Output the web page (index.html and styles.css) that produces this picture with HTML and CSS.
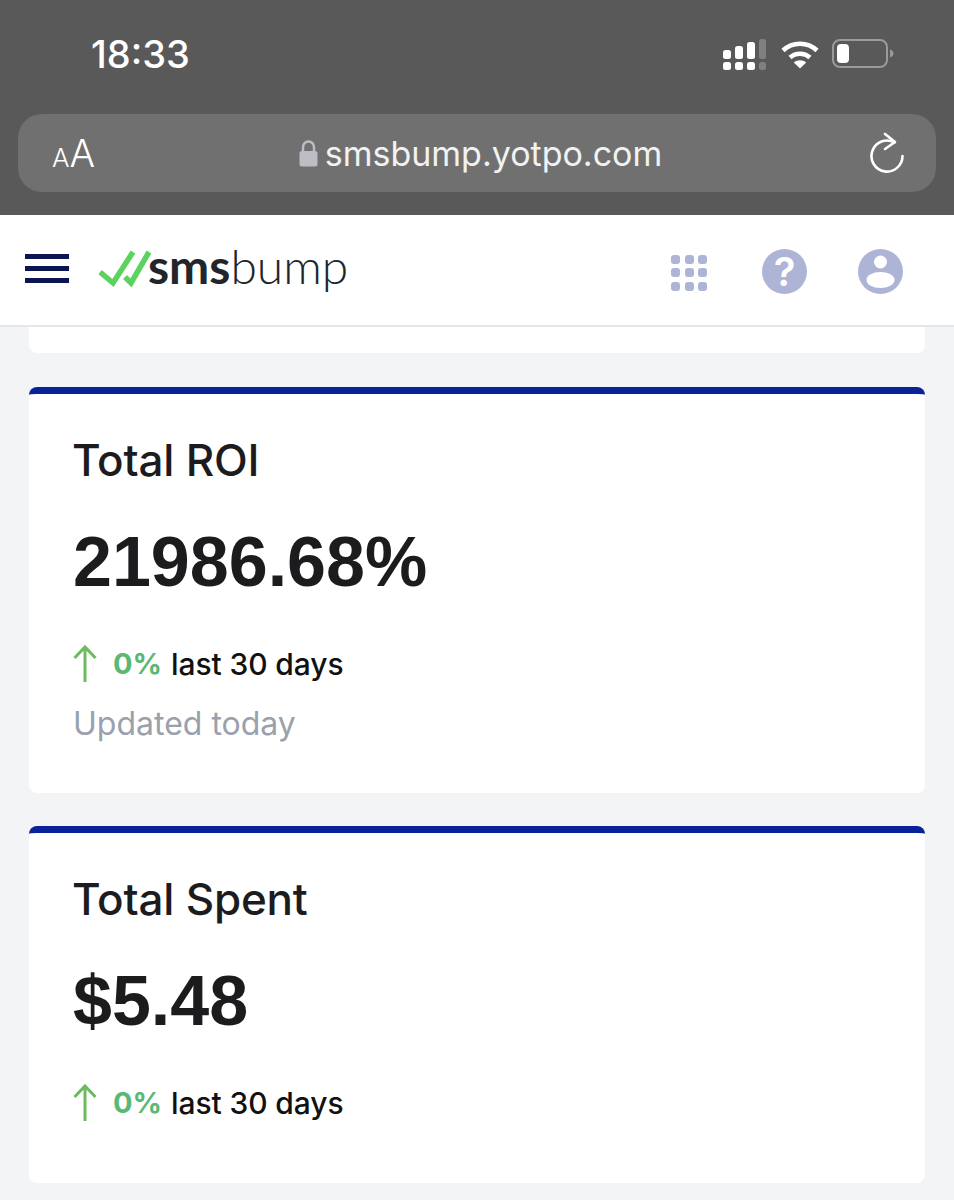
FILE: index.html
```html
<!DOCTYPE html>
<html lang="en">
<head>
  <meta charset="UTF-8" />
  <meta name="viewport" content="width=device-width, initial-scale=1.0" />
  <title>SMSBump dashboard</title>
  <link rel="stylesheet" href="styles.css">
</head>
<body>

  <!-- Phone status bar + Safari address bar -->
  <div class="browser">
    <div class="status-bar">
      <span class="clock">18:33</span>
      <div class="status-icons">
        <svg class="signal" width="45" height="32" viewBox="0 0 45 32">
          <rect x="0" y="11" width="8" height="9" rx="2.5" fill="#fff"/>
          <rect x="12" y="7" width="8" height="13" rx="2.5" fill="#fff"/>
          <rect x="24" y="3" width="8" height="17" rx="2.5" fill="#fff"/>
          <rect x="36" y="0" width="7" height="20" rx="2.5" fill="#808080"/>
          <rect x="0" y="23" width="8" height="8" rx="2.5" fill="#fff"/>
          <rect x="12" y="23" width="8" height="8" rx="2.5" fill="#fff"/>
          <rect x="24" y="23" width="8" height="8" rx="2.5" fill="#fff"/>
          <rect x="36" y="23" width="7" height="8" rx="2.5" fill="#808080"/>
        </svg>
        <svg class="wifi" width="38" height="29" viewBox="0 0 38 29">
          <path d="M2 10.5C11.5 1.5 26.500 1.500 36 10.500" fill="none" stroke="#fff" stroke-width="4.600"/>
          <path d="M9 17.500C14.800 12.500 23.200 12.500 29 17.500" fill="none" stroke="#fff" stroke-width="4.600"/>
          <path d="M12.800 22.500C16.500 19.500 21.500 19.500 25.200 22.500L19 28.500Z" fill="#fff"/>
        </svg>
        <svg class="battery" width="62" height="30" viewBox="0 0 62 30">
          <rect x="1" y="1" width="54" height="27" rx="7" fill="none" stroke="#9a9a9a" stroke-width="2"/>
          <rect x="5" y="5" width="12" height="19" rx="4" fill="#fff"/>
          <path d="M58 10.500C60.500 11.500 61.500 13 61.500 14.500C61.500 16 60.500 17.500 58 18.500Z" fill="#9a9a9a"/>
        </svg>
      </div>
    </div>
    <div class="url-bar">
      <span class="text-size"><small>A</small>A</span>
      <div class="address">
        <svg class="lock" width="19" height="28" viewBox="0 0 19 28">
          <path d="M4 13V8a5.500 5.500 0 0 1 11 0v5" fill="none" stroke="#bdbdc6" stroke-width="2.500"/>
          <rect x="0.500" y="12" width="18" height="15.500" rx="2.500" fill="#bdbdc6"/>
        </svg>
        <span>smsbump.yotpo.com</span>
      </div>
      <svg class="reload" width="36" height="42" viewBox="0 0 36 42">
        <path d="M25.500 10.500A15.500 15.500 0 1 0 33.500 24" fill="none" stroke="#fff" stroke-width="2.600" stroke-linecap="round"/>
        <path d="M16 2L26 10L16 17" fill="none" stroke="#fff" stroke-width="2.600" stroke-linecap="round" stroke-linejoin="round"/>
      </svg>
    </div>
  </div>

  <!-- App nav -->
  <header class="topnav">
    <div class="hamburger"><span></span><span></span><span></span></div>
    <div class="logo">
      <svg width="52" height="38" viewBox="0 0 52 38">
        <path d="M1 22L14 33L34 2" fill="none" stroke="#5cd35f" stroke-width="5.500"/>
        <path d="M26 27L32 33L50 2" fill="none" stroke="#5cd35f" stroke-width="5.500"/>
      </svg>
      <span class="logo-text"><b>sms</b>bump</span>
    </div>
    <div class="nav-icons">
      <div class="apps">
        <i></i><i></i><i></i><i></i><i></i><i></i><i></i><i></i><i></i>
      </div>
      <div class="round-icon help">?</div>
      <svg class="round-icon" width="45" height="45" viewBox="0 0 45 45">
        <circle cx="22.500" cy="22.500" r="22.500" fill="#adb4d6"/>
        <circle cx="22.500" cy="13" r="6.500" fill="#fff"/>
        <ellipse cx="22.500" cy="31" rx="14" ry="8" fill="#fff"/>
      </svg>
    </div>
  </header>

  <main>
    <div class="card-stub"></div>

    <section class="card">
      <h2>Total ROI</h2>
      <div class="value">21986.68%</div>
      <div class="delta">
        <svg width="24" height="38" viewBox="0 0 24 38">
          <path d="M12 37V2M1.500 13L12 2L22.500 13" fill="none" stroke="#6cbb5f" stroke-width="3"/>
        </svg>
        <b>0%</b>
        <span>last 30 days</span>
      </div>
      <div class="updated">Updated today</div>
    </section>

    <section class="card">
      <h2>Total Spent</h2>
      <div class="value">$5.48</div>
      <div class="delta">
        <svg width="24" height="38" viewBox="0 0 24 38">
          <path d="M12 37V2M1.500 13L12 2L22.500 13" fill="none" stroke="#6cbb5f" stroke-width="3"/>
        </svg>
        <b>0%</b>
        <span>last 30 days</span>
      </div>
    </section>
  </main>

</body>
</html>
```
FILE: styles.css
```css
* { box-sizing: border-box; margin: 0; padding: 0; }

html, body { height: 1200px; overflow: hidden; }

body {
  font-family: 'Inter', 'Liberation Sans', sans-serif;
  background: #f3f4f6;
  color: #1c1c1e;
}

/* browser chrome */
.browser {
  height: 215px;
  background: #595959;
  color: #fff;
  padding: 0 18px;
}

.status-bar {
  height: 114px;
  padding: 0 42px 4px 73px;
  display: flex;
  align-items: center;
  justify-content: space-between;
}

.clock { font-size: 38px; font-weight: 500; margin-top: -2px; }

.status-icons { display: flex; align-items: center; gap: 13px; margin-top: -2px; }
.signal { margin-top: 2px; }

.url-bar {
  height: 78px;
  background: #707070;
  border-radius: 24px;
  padding: 0 31px 0 34px;
  display: flex;
  align-items: center;
  justify-content: space-between;
}

.text-size { font-size: 38px; font-weight: 300; width: 60px; }
.text-size small { font-size: 26px; }

.address {
  display: flex;
  align-items: center;
  gap: 7px;
  font-size: 34px;
  color: #f2f2f2;
  margin-right: 20px;
}

/* nav */
.topnav {
  height: 112px;
  background: #fff;
  border-bottom: 2px solid #e5e6e9;
  padding: 3px 51px 0 25px;
  display: flex;
  align-items: center;
}

.hamburger { display: flex; flex-direction: column; gap: 7px; width: 44px; margin-top: -6px; }
.hamburger span { height: 5px; background: #0b1650; }

.logo { display: flex; align-items: center; margin-left: 30px; margin-top: -6px; }
.logo-text {
  font-family: 'Lato', sans-serif;
  font-size: 48px;
  font-weight: 300;
  color: #22252b;
  margin-left: -3px;
  margin-top: -6px;
}
.logo-text b { font-weight: 700; }

.nav-icons { margin-left: auto; display: flex; align-items: center; gap: 51px; }

.apps {
  display: grid;
  grid-template-columns: repeat(3, 9px);
  gap: 4.500px;
  margin-right: 4px;
  margin-top: 2px;
}
.apps i { height: 9px; border-radius: 3px; background: #adb4d6; }

.round-icon { width: 45px; height: 45px; display: block; }
.help {
  border-radius: 50%;
  background: #adb4d6;
  color: #fff;
  font-size: 40px;
  font-weight: 600;
  line-height: 45px;
  text-align: center;
}

/* cards */
main { padding: 0 29px; }

.card-stub {
  height: 26px;
  background: #fff;
  border-radius: 0 0 8px 8px;
  margin-bottom: 34px;
}

.card {
  background: #fff;
  border-top: 7px solid #0a2299;
  border-radius: 8px;
  padding: 42px 44px 49px;
  margin-bottom: 33px;
}

.card h2 {
  font-size: 44px;
  font-weight: 500;
  line-height: 50px;
  letter-spacing: -0.2px;
  margin-left: -1px;
  margin-top: -1px;
}

.value {
  font-family: 'Liberation Sans', sans-serif;
  font-size: 70px;
  font-weight: 700;
  line-height: 80px;
  margin-top: 37px;
}

.delta {
  display: flex;
  align-items: center;
  font-size: 30px;
  font-weight: 500;
  line-height: 40px;
  margin-top: 42px;
  margin-bottom: 11px;
  color: #111;
}
.delta svg { margin-right: 16px; }
.delta b { color: #59b874; font-size: 29px; font-weight: 700; margin-right: 9px; }
.delta span { letter-spacing: -0.1px; }

.updated {
  font-size: 32px;
  line-height: 40px;
  margin-top: 20px;
  color: #9aa1ac;
}
```
